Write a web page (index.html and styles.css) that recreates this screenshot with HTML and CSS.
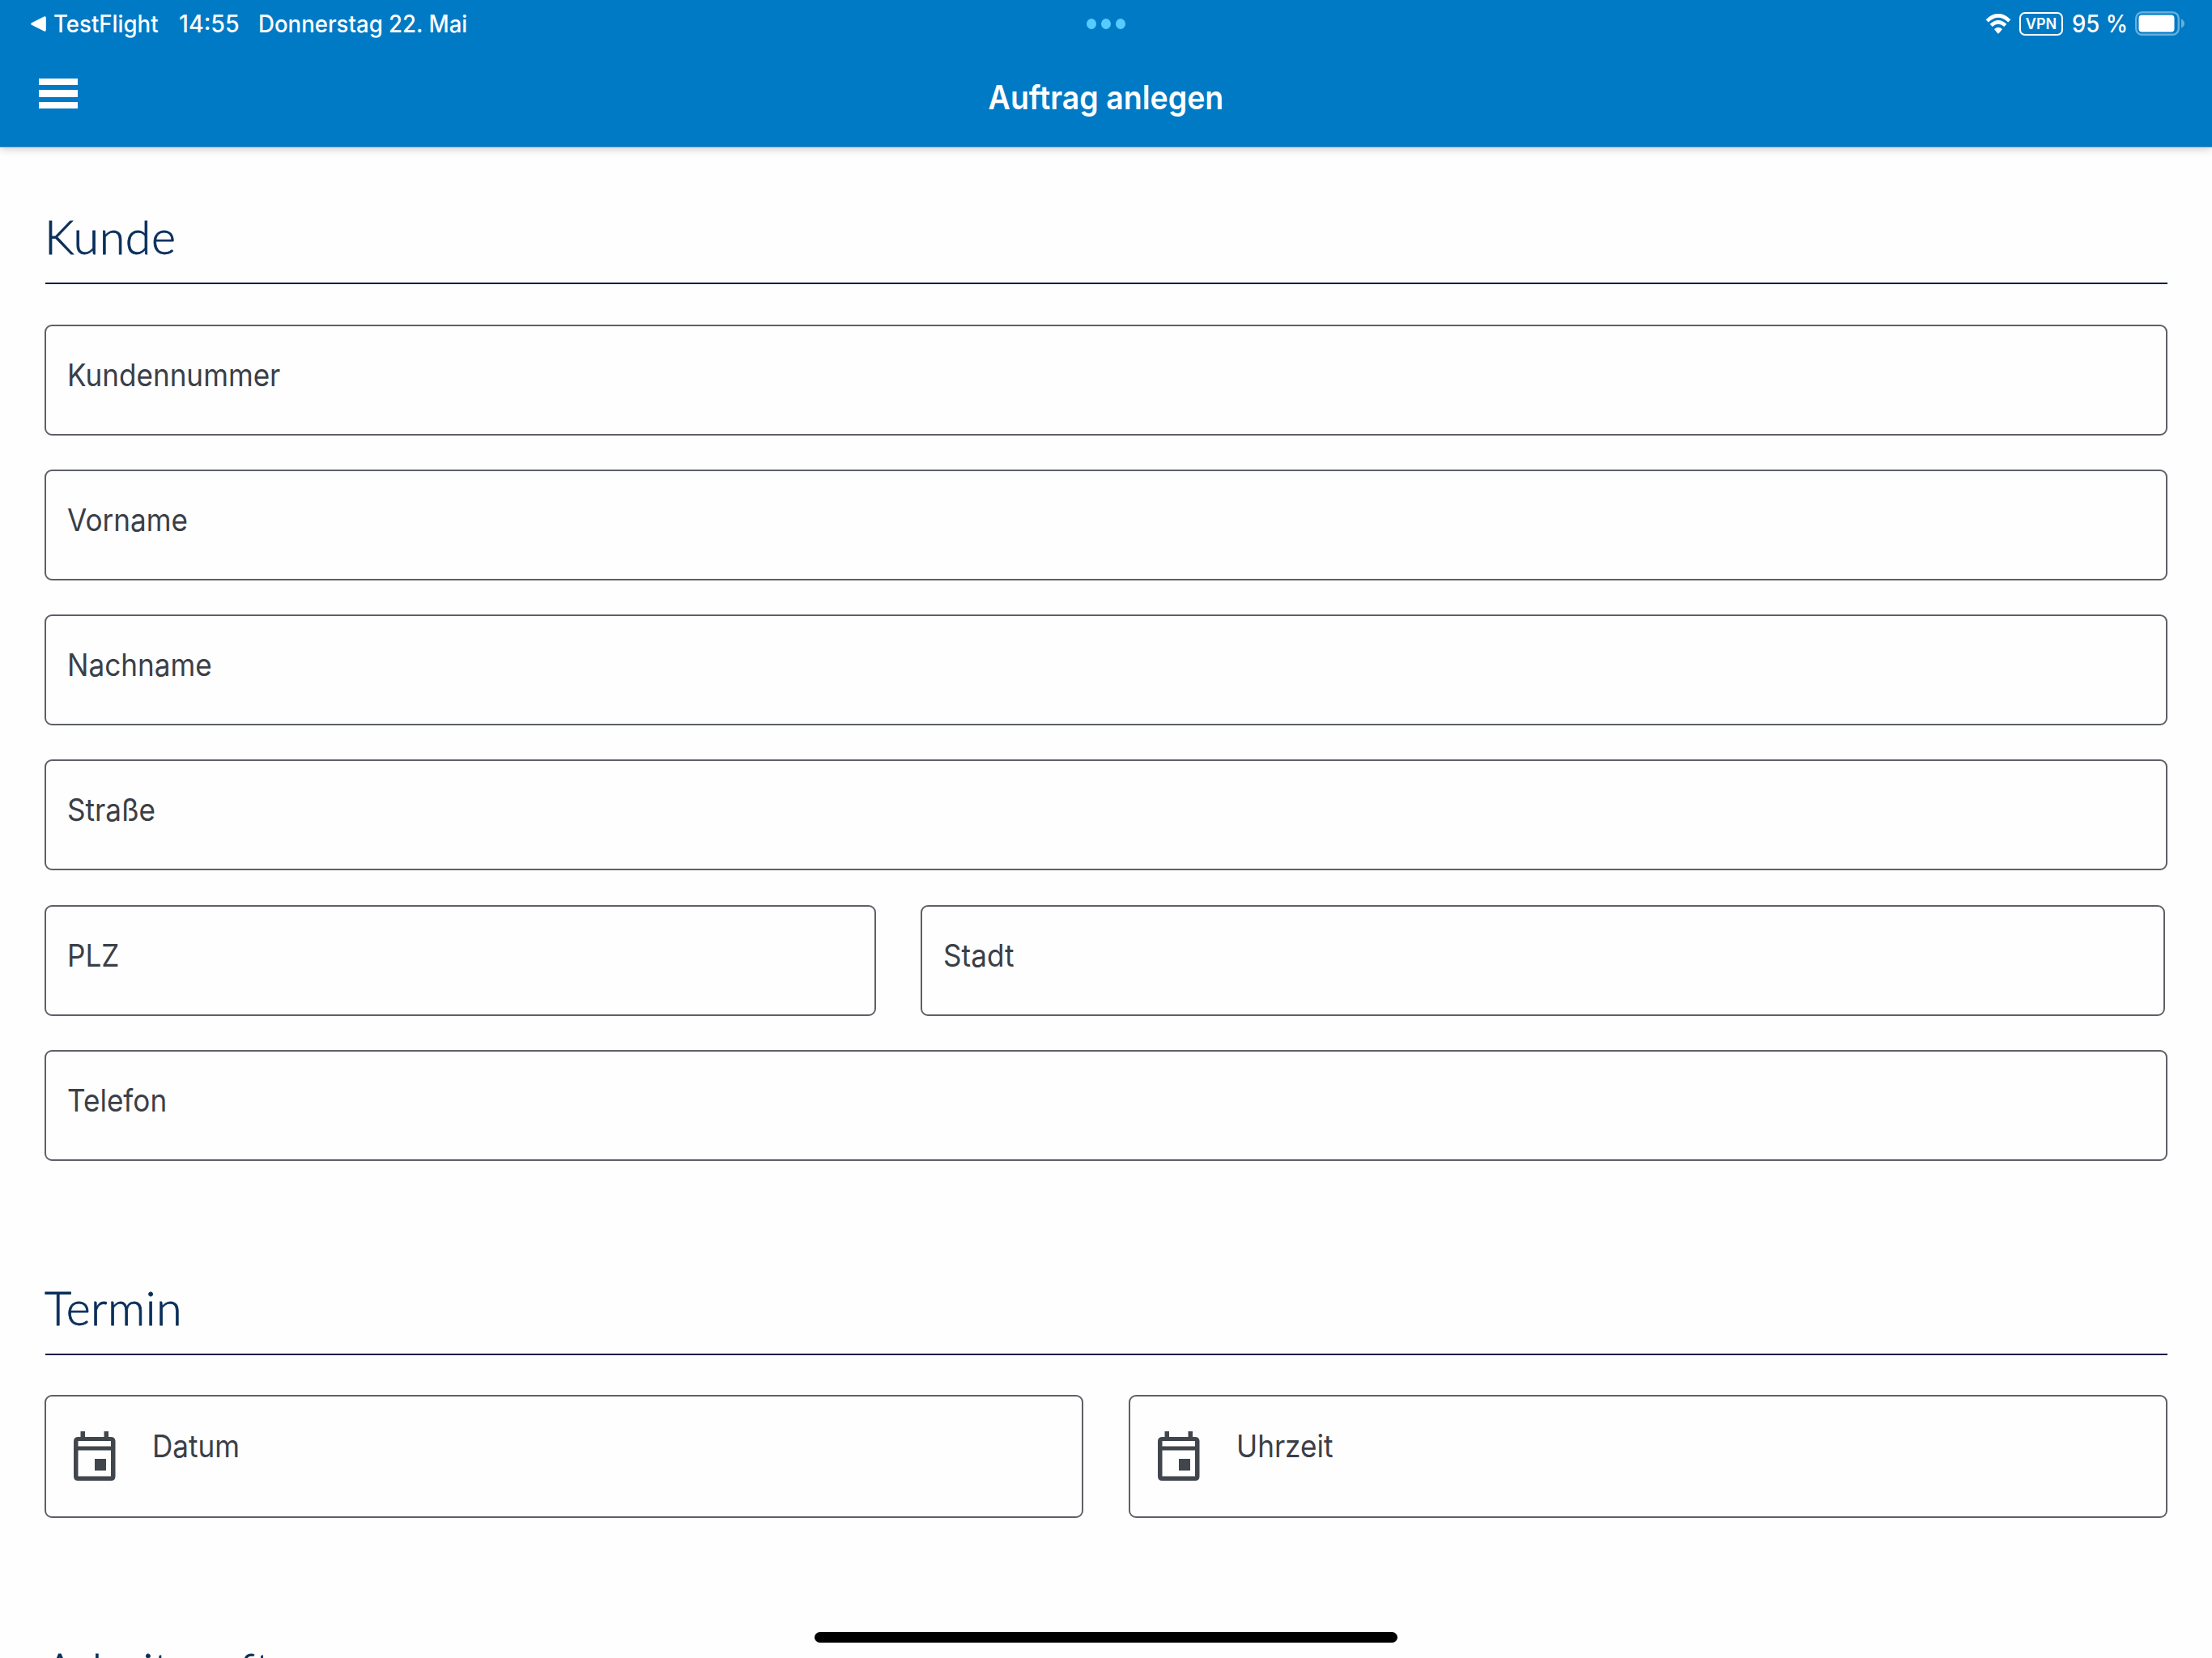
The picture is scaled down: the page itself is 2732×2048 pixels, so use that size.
FILE: index.html
```html
<!DOCTYPE html>
<html lang="de">
  <head>
    <meta charset="UTF-8" />
    <meta name="viewport" content="width=device-width, initial-scale=1.0" />
    <title>Auftrag anlegen</title>
    <link rel="stylesheet" href="styles.css">
  </head>
  <body>
    <header class="header">
      <div class="status-bar">
        <div class="status-left">
          <svg class="back-icon" viewBox="0 0 19 19"><path d="M1 8.2 16.4.5Q18.8-.4 18.8 2v15q0 2.4-2.4 1.5L1 10.800Q-.6 9.500 1 8.200Z" /></svg>
          <span class="status-text app">TestFlight</span>
          <span class="status-text time">14:55</span>
          <span class="status-text date">Donnerstag 22. Mai</span>
        </div>
        <div class="dots"><i></i><i></i><i></i></div>
        <div class="status-right">
          <svg class="wifi-icon" viewBox="0 0 32 25">
            <path d="M2.200 8.800Q16-4.300 29.800 8.800" />
            <path d="M7.200 14.400Q16 6.300 24.800 14.400" />
            <path class="wifi-dot" d="M11 18.900Q16 14.500 21 18.900L16.900 24Q16 25 15.100 24Z" />
          </svg>
          <span class="vpn"><span>VPN</span></span>
          <span class="status-text percent">95 %</span>
          <svg class="battery-icon" viewBox="0 0 62 30">
            <rect class="battery-shell" x="1.200" y="1.200" width="52.600" height="27.600" rx="7.500" />
            <rect x="4.500" y="4.500" width="44" height="21" rx="4" />
            <path class="battery-cap" d="M57 9.500Q61 11.500 61 15T57 20.500Z" />
          </svg>
        </div>
      </div>
      <div class="nav-bar">
        <button class="menu-btn" aria-label="Menü"><i></i><i></i><i></i></button>
        <h1>Auftrag anlegen</h1>
      </div>
    </header>

    <main>
      <section class="kunde">
        <h2>Kunde</h2>
        <form class="fields">
          <div class="field"><label>Kundennummer</label></div>
          <div class="field"><label>Vorname</label></div>
          <div class="field"><label>Nachname</label></div>
          <div class="field"><label>Straße</label></div>
          <div class="row city-row">
            <div class="field"><label>PLZ</label></div>
            <div class="field"><label>Stadt</label></div>
          </div>
          <div class="field"><label>Telefon</label></div>
        </form>
      </section>

      <section class="termin">
        <h2>Termin</h2>
        <div class="row date-row">
          <div class="field icon-field">
            <svg class="calendar-icon" viewBox="0 0 52 61">
              <path d="M8.500 0h5.500v7h23.500V0H43v7h3q5.500 0 5.500 5.500v43q0 5.500-5.500 5.500H5.500Q0 61 0 55.500v-43Q0 7 5.500 7h3ZM5.500 12v6.500H46V12ZM5.500 23.500v32H46v-32ZM26 34h14v14.500H26Z" />
            </svg>
            <label>Datum</label>
          </div>
          <div class="field icon-field">
            <svg class="calendar-icon" viewBox="0 0 52 61">
              <path d="M8.500 0h5.500v7h23.500V0H43v7h3q5.500 0 5.500 5.500v43q0 5.500-5.500 5.500H5.500Q0 61 0 55.500v-43Q0 7 5.500 7h3ZM5.500 12v6.500H46V12ZM5.500 23.500v32H46v-32ZM26 34h14v14.500H26Z" />
            </svg>
            <label>Uhrzeit</label>
          </div>
        </div>
      </section>

      <section class="auftrag">
        <h2>Arbeitsauftrag</h2>
      </section>
    </main>
    <div class="home-indicator"></div>
  </body>
</html>
```
FILE: styles.css
```css
* {
  margin: 0;
  padding: 0;
  box-sizing: border-box;
}
body {
  height: 2048px;
  overflow: hidden;
  background-color: #fefefe;
  color: #3b3f47;
  font-family: Inter, "Liberation Sans", sans-serif;
}
.header {
  height: 182px;
  background-color: #007ac4;
  border-bottom: 1px solid #4c8dbd;
  box-shadow: 0 2px 10px rgba(0, 0, 0, 0.2);
  color: #fff;
}
/* status bar */
.status-bar {
  display: grid;
  grid-template-columns: 1fr auto 1fr;
  align-items: center;
  height: 58px;
  padding: 0 33px;
}
.status-left,
.status-right {
  display: flex;
  align-items: center;
}
.status-left {
  padding-left: 5px;
}
.status-right {
  justify-content: flex-end;
}
svg {
  display: block;
  flex: none;
  fill: currentColor;
}
.back-icon {
  width: 19px;
  height: 19px;
  margin-right: 9px;
}
.status-text {
  flex: none;
  font-size: 29.500px;
  font-weight: 500;
  line-height: 58px;
  white-space: nowrap;
  transform: scaleX(0.935);
  transform-origin: left;
}
.app {
  width: 155px;
}
.time {
  width: 98px;
  transform: scaleX(0.97);
}
.dots {
  display: flex;
  gap: 6px;
}
.dots i {
  width: 12px;
  height: 13px;
  border-radius: 50%;
  background-color: #55cbff;
}
.wifi-icon {
  width: 32px;
  height: 25px;
  margin-right: 10px;
}
.wifi-icon path {
  fill: none;
  stroke: currentColor;
  stroke-width: 4.6;
}
.wifi-icon .wifi-dot {
  fill: currentColor;
  stroke: none;
}
.vpn {
  display: flex;
  align-items: center;
  justify-content: center;
  width: 54px;
  height: 29px;
  margin-right: 11px;
  border: 2px solid #fff;
  border-radius: 7px;
  font-size: 18px;
  font-weight: 600;
}
.percent {
  width: 78px;
}
.battery-icon {
  width: 62px;
  height: 30px;
}
.battery-shell {
  fill: none;
  stroke: #66afdc;
  stroke-width: 2.4;
}
.battery-cap {
  fill: #66afdc;
}
/* title row */
.nav-bar {
  display: grid;
  grid-template-columns: 1fr auto 1fr;
  align-items: start;
  padding: 0 48px;
}
.menu-btn {
  display: flex;
  flex-direction: column;
  gap: 6px;
  width: 48px;
  margin-top: 38.500px;
  border: none;
  background: none;
  cursor: pointer;
}
.menu-btn i {
  height: 8.500px;
  background-color: #fff;
}
h1 {
  margin-top: 38px;
  font-size: 40.500px;
  font-weight: 600;
  line-height: 50px;
  transform: scaleX(0.926);
}
/* form */
main {
  padding: 0 55px;
}
h2 {
  margin-left: 1px;
  padding: 0 0 22px;
  border-bottom: 2px solid #0c1d42;
  color: #0a2f5c;
  font-family: Lato, sans-serif;
  font-size: 57.500px;
  font-weight: 300;
  line-height: 70px;
  letter-spacing: 0.5px;
  text-indent: -1px;
  -webkit-text-stroke: 0.8px #0a2f5c;
}
.kunde {
  padding-top: 75px;
}
.fields {
  display: flex;
  flex-direction: column;
  gap: 42.250px;
  margin-top: 49.500px;
}
.field {
  height: 137px;
  padding: 35px 26px 0;
  border: 2px solid #5d6068;
  border-radius: 9px;
}
label {
  display: inline-block;
  font-size: 38.500px;
  line-height: 50px;
  transform: scaleX(0.912);
  transform-origin: left;
}
.row {
  display: grid;
}
.city-row {
  grid-template-columns: 1027px 1537px;
  gap: 55px;
}
.termin {
  padding-top: 146.500px;
}
.date-row {
  grid-template-columns: 1fr 1fr;
  gap: 56px;
  margin-top: 49px;
}
.icon-field {
  display: flex;
  align-items: flex-start;
  height: 152px;
  padding-top: 36px;
  padding-left: 34px;
}
.calendar-icon {
  width: 52px;
  height: 61px;
  margin: 7px 45px 0 0;
  fill: #41464d;
  fill-rule: evenodd;
}
.auftrag {
  padding-top: 152px;
}
.home-indicator {
  position: absolute;
  left: 1006px;
  top: 2016px;
  width: 720px;
  height: 13px;
  border-radius: 7px;
  background-color: #000;
}
```
